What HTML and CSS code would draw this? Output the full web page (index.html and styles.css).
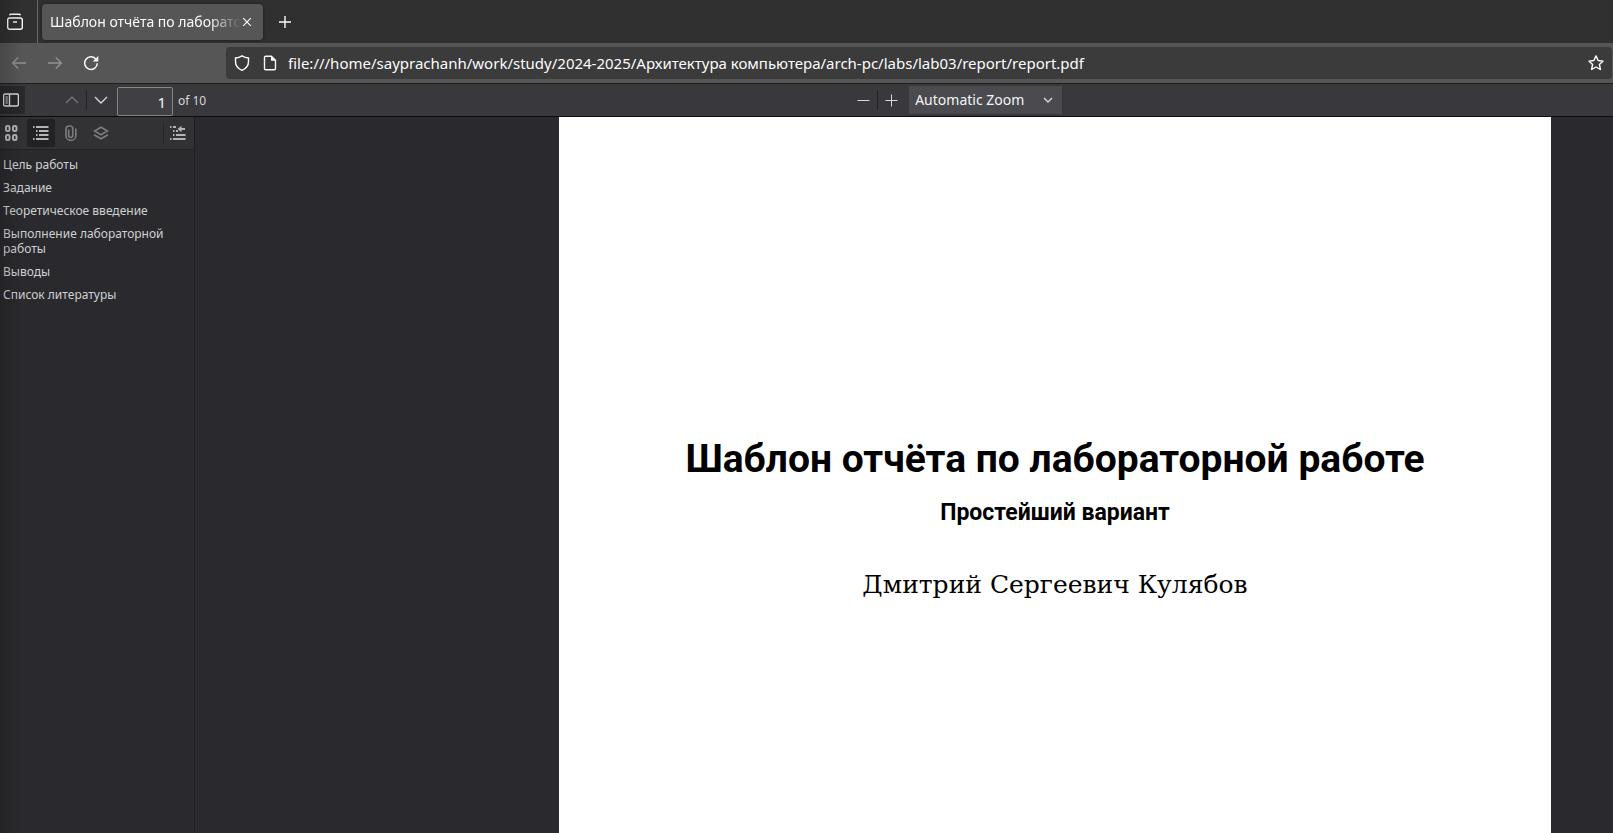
FILE: index.html
```html
<!DOCTYPE html>
<html lang="ru">
<head>
<meta charset="utf-8">
<title>Шаблон отчёта по лабораторной работе</title>
<link rel="stylesheet" href="styles.css">
</head>
<body>
<div class="browser">
  <header class="tab-bar">
    <button class="icon-btn view-btn" aria-label="Recent browsing">
      <svg width="18" height="18" viewBox="0 0 18 18"><path d="M3.500 2.200q.4-.9 1.500-.9h8q1.100 0 1.500.9"/><rect x="1.700" y="5" width="14.600" height="11.300" rx="2"/><path d="M7 9h4"/></svg>
    </button>
    <div class="tab">
      <span class="tab-title">Шаблон отчёта по лаборато</span>
      <button class="icon-btn tab-close" aria-label="Close tab">
        <svg width="10" height="10" viewBox="0 0 10 10"><path d="M1.200 1.200l7.600 7.600M8.800 1.200l-7.600 7.600" stroke-width="1.200"/></svg>
      </button>
    </div>
    <button class="icon-btn new-tab" aria-label="New tab">
      <svg width="14" height="14" viewBox="0 0 14 14"><path d="M7 1v12M1 7h12"/></svg>
    </button>
  </header>

  <nav class="nav-bar">
    <div class="nav-buttons">
      <button class="icon-btn dim" aria-label="Back" disabled>
        <svg width="16" height="16" viewBox="0 0 16 16"><path d="M15 8H1.800M7.200 2.500L1.700 8l5.500 5.500"/></svg>
      </button>
      <button class="icon-btn dim" aria-label="Forward" disabled>
        <svg width="16" height="16" viewBox="0 0 16 16"><path d="M1 8h13.200M8.800 2.500L14.300 8l-5.500 5.500"/></svg>
      </button>
      <button class="icon-btn" aria-label="Reload">
        <svg width="16" height="16" viewBox="0 0 16 16"><path d="M13.200 4.600A6.300 6.300 0 1 0 14.300 8.300" stroke-width="1.500"/><path class="solid" d="M15.300 1v5.600H9.700z"/></svg>
      </button>
    </div>
    <div class="url-bar">
      <svg width="16" height="16" viewBox="0 0 16 16"><path d="M8 .8q3 1.900 6.500 2.200v3.500c0 4-2.500 7.200-6.500 8.900C4 13.700 1.500 10.500 1.500 6.500V3Q5 2.700 8 .8z"/></svg>
      <svg width="16" height="16" viewBox="0 0 16 16"><path d="M9.300 1.200H3.700q-1.200 0-1.200 1.200v11.200q0 1.200 1.200 1.200h8.600q1.200 0 1.200-1.200V5.300z"/><path class="solid" d="M9 1v4.700h4.700z"/></svg>
      <input class="url-input" type="text" aria-label="Address" value="file:///home/sayprachanh/work/study/2024-2025/Архитектура компьютера/arch-pc/labs/lab03/report/report.pdf">
      <button class="icon-btn" aria-label="Bookmark this page">
        <svg width="16" height="16" viewBox="0 0 16 16"><path stroke-linejoin="round" d="M8 .9l2.100 4.600 5 .6-3.700 3.400 1 5L8 12l-4.400 2.500 1-5L.9 6.100l5-.6z"/></svg>
      </button>
    </div>
  </nav>

  <div class="pdf-bar">
    <div class="pdf-left">
      <button class="icon-btn sidebar-toggle" aria-label="Toggle sidebar">
        <svg width="16" height="14" viewBox="0 0 16 14"><rect x=".6" y="1" width="14.800" height="12" rx="1.500"/><path d="M6.500 1v12"/><path d="M2.500 4h2.300M2.500 6h2.300M2.500 8h2.300M2.500 10h2.300" stroke-width="1"/></svg>
      </button>
      <button class="icon-btn step dim" aria-label="Previous page" disabled>
        <svg width="14" height="8" viewBox="0 0 14 8"><path d="M1 7l6-6 6 6"/></svg>
      </button>
      <span class="split"></span>
      <button class="icon-btn step" aria-label="Next page">
        <svg width="14" height="8" viewBox="0 0 14 8"><path d="M1 1l6 6 6-6"/></svg>
      </button>
      <input class="page-input" id="page" type="text" value="1" aria-label="Page">
      <label class="page-count" for="page">of 10</label>
    </div>
    <div class="pdf-zoom">
      <button class="icon-btn zoom-btn" aria-label="Zoom out">
        <svg width="13" height="13" viewBox="0 0 13 13"><path d="M.5 6.500h12"/></svg>
      </button>
      <span class="split"></span>
      <button class="icon-btn zoom-btn" aria-label="Zoom in">
        <svg width="13" height="13" viewBox="0 0 13 13"><path d="M.5 6.500h12M6.500.5v12"/></svg>
      </button>
      <div class="zoom-box">
        <select class="zoom-select" aria-label="Zoom"><option>Automatic Zoom</option></select>
        <svg class="zoom-arrow" width="10" height="6" viewBox="0 0 10 6"><path d="M1 1l4 4 4-4"/></svg>
      </div>
    </div>
  </div>

  <div class="workspace">
    <aside class="sidebar">
      <div class="side-bar">
        <button class="icon-btn side-btn first" aria-label="Thumbnails">
          <svg class="heavy" width="14" height="16" viewBox="0 0 14 16"><rect x="2" y="1" width="3.500" height="5" rx="1.300"/><rect x="9" y="1" width="3.500" height="5" rx="1.300"/><rect x="2" y="10" width="3.500" height="5" rx="1.300"/><rect x="9" y="10" width="3.500" height="5" rx="1.300"/></svg>
        </button>
        <button class="icon-btn side-btn active" aria-label="Document outline">
          <svg class="heavy" width="16" height="16" viewBox="0 0 16 16"><path d="M0 2h1.500M3 2h12.500M3 6h1.500M6 6h9.500M3 10h1.500M6 10h9.500M0 14h1.500M3 14h12.500"/></svg>
        </button>
        <button class="icon-btn side-btn dim" aria-label="Attachments" disabled>
          <svg width="12" height="16" viewBox="0 0 12 16"><path d="M3.700 4.500v6a2 2 0 0 0 4 0V3.200A2.500 2.500 0 0 0 5.200 1h-1A3.200 3.200 0 0 0 1 4v6.700a4.800 4.600 0 0 0 9.800 0V3.500"/></svg>
        </button>
        <button class="icon-btn side-btn dim" aria-label="Layers" disabled>
          <svg width="16" height="14" viewBox="0 0 16 14"><path d="M8 1.200l6.500 3.800L8 8.800 1.500 5zM1 8.800l7 4 7-4"/></svg>
        </button>
        <span class="side-end">
          <span class="split"></span>
          <button class="icon-btn side-btn" aria-label="Current outline item">
            <svg class="heavy" width="16" height="16" viewBox="0 0 16 16"><path d="M0 2h1.500M3 2h3M3 6h1.500M6 6h2M3 10h1.500M6 10h9.500M0 14h1.500M3 14h12.500M10 4h5"/><path class="solid" d="M7.500 4L11.500.8v6.400z"/></svg>
          </button>
        </span>
      </div>
      <div class="outline">
        <a href="#goal">Цель работы</a>
        <a href="#task">Задание</a>
        <a href="#theory">Теоретическое введение</a>
        <a href="#work">Выполнение лабораторной работы</a>
        <a href="#results">Выводы</a>
        <a href="#refs">Список литературы</a>
      </div>
    </aside>
    <main class="viewer">
      <article class="sheet">
        <h1>Шаблон отчёта по лабораторной работе</h1>
        <h2>Простейший вариант</h2>
        <p class="author">Дмитрий Сергеевич Кулябов</p>
      </article>
    </main>
  </div>
</div>
</body>
</html>
```
FILE: styles.css
```css
* { box-sizing: border-box; }
body {
  margin: 0;
  background: #2a2a2e;
  color: #fbfbfe;
  font-family: "Noto Sans", "Open Sans", sans-serif;
}
.browser {
  position: relative;
  display: flex;
  flex-direction: column;
  height: 100vh;
  overflow: hidden;
}
/* shade cast along the window's left edge */
.browser::after {
  content: "";
  position: absolute;
  inset: 0 auto 0 0;
  width: 24px;
  background: linear-gradient(to right, rgba(0, 0, 0, .16), rgba(0, 0, 0, 0));
  pointer-events: none;
}
svg {
  display: block;
  flex: none;
  fill: none;
  stroke: currentColor;
  stroke-width: 1.4;
}
.solid { fill: currentColor; stroke: none; }
.icon-btn {
  display: flex;
  align-items: center;
  justify-content: center;
  flex: none;
  padding: 0;
  border: 0;
  background: none;
  color: inherit;
}
.dim { color: #929292; }
.split { width: 1px; height: 20px; background: #232326; }

.tab-bar {
  display: flex;
  align-items: center;
  flex: none;
  height: 43px;
  background: #303030;
}
.view-btn {
  width: 38px;
  height: 43px;
  padding-right: 8px;
  border-right: 1px solid #666;
}
.tab {
  display: flex;
  align-items: center;
  width: 221px;
  height: 36px;
  margin-left: 4px;
  padding: 0 10px 0 8px;
  border-radius: 4px;
  background: #565656;
  box-shadow: 0 0 3px rgba(0, 0, 0, .5);
}
.tab-title {
  flex: 1;
  overflow: hidden;
  font-size: 14px;
  white-space: nowrap;
  mask-image: linear-gradient(to left, transparent, #000 32px);
}
.tab-close { width: 12px; height: 20px; }
.new-tab { width: 44px; height: 36px; }

.nav-bar {
  display: flex;
  align-items: center;
  flex: none;
  height: 41px;
  border-bottom: 1px solid #1d1d1f;
  background: #565656;
}
.nav-buttons {
  display: flex;
  gap: 20px;
  width: 226px;
  padding-left: 11px;
}
.url-bar {
  display: flex;
  flex: 1;
  align-items: center;
  gap: 12px;
  height: 32px;
  margin-right: 1px;
  padding: 0 8px;
  border-radius: 4px;
  background: #3b3b3b;
}
.url-input {
  flex: 1;
  min-width: 0;
  margin-left: -2px;
  padding: 0;
  border: 0;
  outline: 0;
  background: none;
  color: inherit;
  font: 15px/24px "Noto Sans", sans-serif;
}

.pdf-bar {
  display: grid;
  grid-template-columns: 852fr auto 552fr;
  flex: none;
  height: 33px;
  border-bottom: 1px solid #0c0c0d;
  background: #38383d;
  color: #d8d8da;
}
.pdf-left, .pdf-zoom { display: flex; align-items: center; }
.sidebar-toggle {
  width: 25px;
  height: 28px;
  padding-left: 3px;
  justify-content: flex-start;
  border-radius: 0 2px 2px 0;
  background: #28282b;
  margin-right: 33px;
}
.step { width: 28px; height: 28px; }
.step.dim { color: #77777b; }
.page-input {
  width: 56px;
  height: 29px;
  margin: 3px 5px 0 2px;
  padding: 0 6px;
  border: 1px solid #858588;
  border-radius: 2px;
  background: #404044;
  color: #f4f4f6;
  font: 15px/24px "Noto Sans", sans-serif;
  text-align: right;
}
.page-count { font-size: 12px; }
.zoom-btn { width: 27px; height: 28px; }
.zoom-btn svg { stroke-width: 1; }
.zoom-box { position: relative; margin-left: 4px; }
.zoom-select {
  display: block;
  width: 153px;
  height: 28px;
  padding: 0 6px;
  border: 0;
  appearance: none;
  background: #4a4a4f;
  color: #f4f4f6;
  font: 14px/20px "Noto Sans", sans-serif;
}
.zoom-arrow { position: absolute; right: 9px; top: 11px; pointer-events: none; }

.workspace { display: flex; flex: 1; min-height: 0; }
.sidebar {
  flex: none;
  width: 195px;
  border-right: 1px solid #202022;
}
.side-bar {
  display: flex;
  align-items: center;
  height: 33px;
  border-bottom: 1px solid #232326;
  background: #323234;
  color: #b4b4b4;
}
.side-btn { width: 28px; height: 28px; margin-right: 2px; }
.side-btn svg { stroke-width: 1.6; }
.side-btn .heavy { stroke-width: 2; }
.side-btn.first { width: 21px; margin-right: 6px; }
.side-btn.active { background: #222224; border-radius: 2px; }
.side-btn.dim { color: #7c7c7e; }
.side-end { display: flex; align-items: center; margin-left: auto; }
.outline {
  display: flex;
  flex-direction: column;
  gap: 8px;
  padding: 7px 4px 0 3px;
}
.outline a {
  color: #d0d0d2;
  font-size: 12px;
  line-height: 15px;
  text-decoration: none;
}
.viewer {
  display: grid;
  grid-template-columns: 364fr 992fr 62fr;
  flex: 1;
}
.sheet {
  grid-column: 2;
  padding-top: 314px;
  background: #fff;
  color: #000;
  text-align: center;
}
.sheet h1, .sheet h2 { font-family: Roboto, sans-serif; }
.sheet h1 { margin: 0; font-size: 39px; line-height: 56px; white-space: nowrap; }
.sheet h2 { margin: 10px 0 0; font-size: 23px; line-height: 32px; }
.author {
  margin: 38px 0 0;
  font-family: "DejaVu Serif", serif;
  font-size: 25px;
  line-height: 36px;
}
```
